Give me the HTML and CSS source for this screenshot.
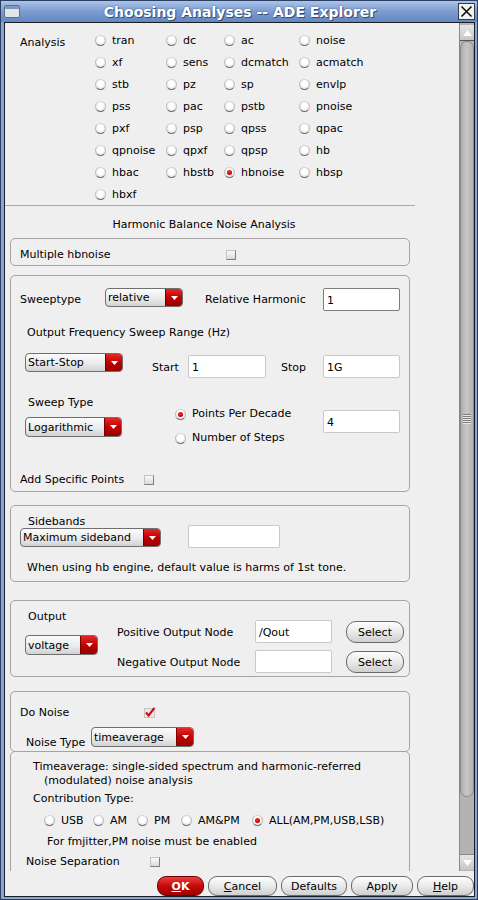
FILE: index.html
```html
<!DOCTYPE html>
<html>
<head>
<meta charset="utf-8">
<link rel="stylesheet" href="styles.css">
</head>
<body>
<div class="window">
  <div class="titlebar">
    <svg class="win-icon" width="16" height="13" viewBox="0 0 16 13"><rect x="0.5" y="0.5" width="15" height="12" rx="1.5" fill="#e4e4e4" stroke="#5d6f8e"/><rect x="1" y="1" width="14" height="3" fill="#7f97bd"/></svg>
    <div class="title">Choosing Analyses -- ADE Explorer</div>
    <svg class="close" width="17" height="17" viewBox="0 0 17 17"><rect x="0.5" y="0.5" width="16" height="16" fill="#f2f2f2" stroke="#3a3a3a"/><path d="M3.5 3.5 L13.5 13.5 M13.5 3.5 L3.5 13.5" stroke="#111" stroke-width="1.6"/></svg>
  </div>
  <div class="client">
    <div class="main">
      <div class="scroll">
        <div class="analysis">
          <div class="an-label">Analysis</div>
          <div class="an-grid">
            <div class="opt"><span class="radio"></span>tran</div>
            <div class="opt"><span class="radio"></span>dc</div>
            <div class="opt"><span class="radio"></span>ac</div>
            <div class="opt"><span class="radio"></span>noise</div>
            <div class="opt"><span class="radio"></span>xf</div>
            <div class="opt"><span class="radio"></span>sens</div>
            <div class="opt"><span class="radio"></span>dcmatch</div>
            <div class="opt"><span class="radio"></span>acmatch</div>
            <div class="opt"><span class="radio"></span>stb</div>
            <div class="opt"><span class="radio"></span>pz</div>
            <div class="opt"><span class="radio"></span>sp</div>
            <div class="opt"><span class="radio"></span>envlp</div>
            <div class="opt"><span class="radio"></span>pss</div>
            <div class="opt"><span class="radio"></span>pac</div>
            <div class="opt"><span class="radio"></span>pstb</div>
            <div class="opt"><span class="radio"></span>pnoise</div>
            <div class="opt"><span class="radio"></span>pxf</div>
            <div class="opt"><span class="radio"></span>psp</div>
            <div class="opt"><span class="radio"></span>qpss</div>
            <div class="opt"><span class="radio"></span>qpac</div>
            <div class="opt"><span class="radio"></span>qpnoise</div>
            <div class="opt"><span class="radio"></span>qpxf</div>
            <div class="opt"><span class="radio"></span>qpsp</div>
            <div class="opt"><span class="radio"></span>hb</div>
            <div class="opt"><span class="radio"></span>hbac</div>
            <div class="opt"><span class="radio"></span>hbstb</div>
            <div class="opt"><span class="radio on"></span>hbnoise</div>
            <div class="opt"><span class="radio"></span>hbsp</div>
            <div class="opt"><span class="radio"></span>hbxf</div>
          </div>
        </div>
        <div class="sep"></div>
        <div class="heading">Harmonic Balance Noise Analysis</div>

        <div class="box box1">
          <div class="row-c"><span class="lbl w206">Multiple hbnoise</span><span class="cb"></span></div>
        </div>

        <div class="box box2">
          <div class="r1">
            <span class="lbl w85 lh24 mt1">Sweeptype</span>
            <div class="dd w78 mt1"><span class="dd-val">relative</span><span class="dd-btn"><svg width="7" height="4" viewBox="0 0 7 4"><path d="M0 0H7L3.5 4Z" fill="#fff"/></svg></span></div>
            <span class="lbl w118 lh24 ml22 mt1">Relative Harmonic</span>
            <div class="inp w77 mt1 dark">1</div>
          </div>
          <div class="r2 lh16">Output Frequency Sweep Range (Hz)</div>
          <div class="r3">
            <div class="dd w98"><span class="dd-val">Start-Stop</span><span class="dd-btn"><svg width="7" height="4" viewBox="0 0 7 4"><path d="M0 0H7L3.5 4Z" fill="#fff"/></svg></span></div>
            <span class="lbl w36 lh16 ml29 mt7">Start</span>
            <div class="inp w78 mt2">1</div>
            <span class="lbl w42 lh16 ml15 mt7">Stop</span>
            <div class="inp w77 mt2">1G</div>
          </div>
          <div class="r4">
            <div class="col-left">
              <div class="lh16 pl3 pt1">Sweep Type</div>
              <div class="dd w97 h20 mt6"><span class="dd-val">Logarithmic</span><span class="dd-btn"><svg width="7" height="4" viewBox="0 0 7 4"><path d="M0 0H7L3.5 4Z" fill="#fff"/></svg></span></div>
            </div>
            <div class="col-mid">
              <div class="opt lh24"><span class="radio on"></span>Points Per Decade</div>
              <div class="opt lh24"><span class="radio"></span>Number of Steps</div>
            </div>
            <div class="inp w77 mt16">4</div>
          </div>
          <div class="r5 row-c lh16"><span class="lbl w124">Add Specific Points</span><span class="cb"></span></div>
        </div>

        <div class="box box3">
          <div class="sb-row">
            <div class="sb-left">
              <div class="lh14 pl8 pt1">Sidebands</div>
              <div class="dd w141"><span class="dd-val">Maximum sideband</span><span class="dd-btn"><svg width="7" height="4" viewBox="0 0 7 4"><path d="M0 0H7L3.5 4Z" fill="#fff"/></svg></span></div>
            </div>
            <div class="inp w92 sb-inp"></div>
          </div>
          <div class="sb-note lh16">When using hb engine, default value is harms of 1st tone.</div>
        </div>

        <div class="box box4">
          <div class="out-row">
            <div class="out-left">
              <div class="lh16 pl3">Output</div>
              <div class="dd w73 h20 mt10"><span class="dd-val">voltage</span><span class="dd-btn"><svg width="7" height="4" viewBox="0 0 7 4"><path d="M0 0H7L3.5 4Z" fill="#fff"/></svg></span></div>
            </div>
            <div class="out-right">
              <div class="node-row">
                <span class="lbl w138 node-lbl">Positive Output Node</span>
                <div class="inp w77">/Qout</div>
                <div class="pbtn sel">Select</div>
              </div>
              <div class="node-row mt7">
                <span class="lbl w138 node-lbl">Negative Output Node</span>
                <div class="inp w77"></div>
                <div class="pbtn sel">Select</div>
              </div>
            </div>
          </div>
        </div>

        <div class="box box5">
          <div class="row-c lh16 pl9"><span class="lbl w124">Do Noise</span><svg class="check" width="12" height="11" viewBox="0 0 12 11"><rect x="0.5" y="1.5" width="10" height="9" fill="#e8e8e8" stroke="#c4c4c4"/><path d="M2 5.5 L4.6 8.5 L10.5 0.8" fill="none" stroke="#d20f0f" stroke-width="2.2"/></svg></div>
          <div class="nt-row">
            <span class="lbl w65 lh16 mt8">Noise Type</span>
            <div class="dd w103 h20"><span class="dd-val">timeaverage</span><span class="dd-btn"><svg width="7" height="4" viewBox="0 0 7 4"><path d="M0 0H7L3.5 4Z" fill="#fff"/></svg></span></div>
          </div>
        </div>

        <div class="box box6">
          <div class="lh14 pl22">Timeaverage: single-sided spectrum and harmonic-referred</div>
          <div class="lh14 pl33">(modulated) noise analysis</div>
          <div class="lh14 pl22 mt4">Contribution Type:</div>
          <div class="ct-row">
            <div class="opt w49"><span class="radio"></span>USB</div>
            <div class="opt w44"><span class="radio"></span>AM</div>
            <div class="opt w44"><span class="radio"></span>PM</div>
            <div class="opt w71"><span class="radio"></span>AM&amp;PM</div>
            <div class="opt"><span class="radio on"></span>ALL(AM,PM,USB,LSB)</div>
          </div>
          <div class="lh16 pl36 mt3">For fmjitter,PM noise must be enabled</div>
          <div class="row-c lh16 pl15 mt4"><span class="lbl w124">Noise Separation</span><span class="cb"></span></div>
        </div>
      </div>
      <div class="sbar">
        <div class="sb-arrow up"><svg width="9" height="6" viewBox="0 0 9 6"><path d="M0 6H9L4.5 0Z" fill="#fff"/></svg></div>
        <div class="sb-thumb"><div class="grip"></div></div>
        <div class="sb-trough"></div>
        <div class="sb-arrow down"><svg width="9" height="6" viewBox="0 0 9 6"><path d="M0 0H9L4.5 6Z" fill="#fff"/></svg></div>
      </div>
    </div>
    <div class="buttons">
      <div class="pbtn ok"><u>O</u>K</div>
      <div class="pbtn w69"><u>C</u>ancel</div>
      <div class="pbtn w66">Defaults</div>
      <div class="pbtn w62">Apply</div>
      <div class="pbtn w57"><u>H</u>elp</div>
    </div>
  </div>
</div>
</body>
</html>
```
FILE: styles.css
```css
html, body { margin: 0; padding: 0; }
body { background: #ffffff; font-family: "DejaVu Sans", sans-serif; font-size: 11px; color: #000; }

.window {
  width: 478px; height: 900px; box-sizing: border-box;
  border: 1px solid #2b3e63;
  background: #86a6d6;
  display: flex; flex-direction: column;
}
.titlebar {
  height: 21px; flex: none;
  display: flex; align-items: center;
  background: linear-gradient(#acc4e8, #7f9fd3 45%, #6287c2);
  padding: 0 2px 0 3px;
}
.win-icon { flex: none; }
.title {
  flex: 1; text-align: center;
  font-weight: bold; font-size: 14px; color: #fff; line-height: 18px;
  text-shadow: 1px 1px 0 #3a4d6e, 0 0 2px #4b6290;
  margin-left: 2px;
}
.close { flex: none; }

.client {
  flex: 1;
  margin: 0 2px 2px 3px;
  border: 1px solid #1d1d1d;
  background: #efefef;
  display: flex; flex-direction: column;
  min-height: 0;
}
.main { height: 848px; display: flex; flex: none; }
.scroll { width: 454px; height: 848px; overflow: hidden; flex: none; }

/* analysis radios */
.analysis { display: flex; padding: 6px 0 0 15px; }
.an-label { width: 75px; line-height: 22px; margin-top: 3px; }
.an-grid { display: grid; grid-template-columns: 71px 58px 75px 80px; grid-auto-rows: 22px; }
.opt { display: flex; align-items: center; gap: 6px; white-space: nowrap; }

.radio {
  width: 11px; height: 11px; box-sizing: border-box; border-radius: 50%;
  flex: none; position: relative;
  border: 1px solid; border-color: #d2d2d2 #bcbcbc #6e6e6e #bcbcbc;
  background: radial-gradient(circle at 50% 40%, #ffffff 0 40%, #ececec 65%, #cfcfcf 100%);
}
.radio.on::after {
  content: ""; position: absolute; left: 2px; top: 2px;
  width: 5px; height: 5px; border-radius: 50%;
  background: radial-gradient(circle at 45% 40%, #ff3030, #c80000 60%, #900000);
}

.sep { width: 410px; height: 1px; background: #a9a9a9; }
.heading { margin-top: 11px; line-height: 16px; width: 398px; text-align: center; }

.box {
  margin-left: 5px; width: 400px; box-sizing: border-box;
  border: 1px solid #a4a4a4; border-radius: 5px;
}
.box1 { margin-top: 5px; padding: 5px 0 0 9px; line-height: 21px; }
.box2 { margin-top: 9px; padding: 11px 0 3px 0; }
.box3 { margin-top: 13px; padding: 8px 0 5px 9px; }
.box4 { margin-top: 18px; padding: 8px 0 3px 14px; }
.box5 { margin-top: 14px; padding: 13px 0 0 0; }
.box6 { margin-top: -1px; padding: 8px 0 20px 0; border-radius: 5px 5px 0 0; }

.row-c { display: flex; align-items: center; }
.lbl { display: block; flex: none; white-space: nowrap; }

.r1 { display: flex; align-items: flex-start; padding-left: 9px; height: 24px; }
.r2 { margin-top: 14px; padding-left: 16px; }
.r3 { display: flex; align-items: flex-start; margin-top: 12px; padding-left: 14px; }
.r4 { display: flex; align-items: flex-start; margin-top: 16px; padding-left: 14px; }
.col-left { width: 150px; flex: none; }
.col-mid { width: 148px; flex: none; margin-top: 8px; }
.r5 { margin-top: 22px; padding-left: 9px; }

.sb-row { display: flex; }
.sb-left { flex: none; }
.sb-left .lh14 { line-height: 13px; }
.sb-inp { align-self: flex-end; margin-bottom: -1px; margin-left: 27px; }
.sb-note { margin-top: 13px; padding-left: 7px; }

.out-row { display: flex; align-items: flex-start; }
.out-left { width: 92px; flex: none; }
.out-right { margin-top: 11px; }
.node-row { display: flex; align-items: flex-start; }
.node-lbl { height: 23px; box-sizing: border-box; padding-top: 2px; line-height: 21px; }
.node-row .sel { margin-left: 14px; margin-top: 1px; }

.nt-row { display: flex; align-items: flex-start; margin-top: 6px; padding-left: 15px; }
.check { flex: none; margin-top: -2px; }

.ct-row { display: flex; margin-top: 3px; padding-left: 33px; height: 22px; }

/* dropdown */
.dd {
  display: flex; flex: none; height: 19px; box-sizing: border-box;
  border: 1px solid #6f6f6f; border-radius: 4px; overflow: hidden;
  background: linear-gradient(#fbfbfb, #ebebeb 55%, #d2d2d2);
}
.dd-val { flex: 1; padding: 1px 0 0 2px; line-height: 16px; white-space: nowrap; overflow: hidden; }
.dd-btn {
  width: 16px; flex: none; display: flex; align-items: center; justify-content: center;
  background: linear-gradient(#e32a2a, #c00000 50%, #980000);
  border-left: 1px solid #7a0000;
}
.dd.h20 { height: 20px; }
.dd.h20 .dd-val { line-height: 17px; }

/* input */
.inp {
  flex: none; height: 23px; box-sizing: border-box;
  background: #fff; border: 1px solid #c9c9c9; border-radius: 2px;
  padding: 3px 0 0 3px; line-height: 18px; white-space: nowrap;
}
.inp.dark { border-color: #7d7d7d; }

/* checkbox */
.cb {
  display: block; flex: none; width: 10px; height: 10px; box-sizing: border-box;
  border: 1px solid; border-color: #c2c2c2 #7e7e7e #7e7e7e #c2c2c2;
  background: linear-gradient(#fafafa, #dadada);
}

/* pill buttons */
.pbtn {
  flex: none; box-sizing: border-box; height: 20px;
  border: 1px solid #6a6a6a; border-radius: 9px;
  background: linear-gradient(#fdfdfd, #ececec 45%, #cfcfcf);
  text-align: center; padding-top: 2px; line-height: 16px; white-space: nowrap;
}
.pbtn.sel { width: 58px; height: 22px; padding-top: 2px; line-height: 18px; border-radius: 10px; }
.pbtn u { text-decoration: underline; }
.pbtn.ok {
  width: 47px; color: #fff; font-weight: bold;
  background: linear-gradient(#e84040, #c80808 50%, #9e0000);
  border-color: #6b0000;
}

.buttons { display: flex; justify-content: flex-end; gap: 4px; padding-top: 5px; }

/* scrollbar */
.sbar {
  width: 15px; flex: none; box-sizing: border-box;
  background: #b3b3b3; border-left: 1px solid #888;
  display: flex; flex-direction: column; padding-top: 2px;
}
.sb-arrow {
  height: 15px; flex: none; display: flex; align-items: center; justify-content: center;
  background: linear-gradient(#e6e6e6, #c6c6c6);
}
.sb-arrow.up { border-bottom: 1px solid #555; }
.sb-arrow.down { border-top: 1px solid #8a8a8a; margin-bottom: 1px; }
.sb-thumb {
  height: 756px; flex: none; box-sizing: border-box;
  border: 1px solid #8a8a8a; border-radius: 7px;
  background: linear-gradient(90deg, #aeaeae, #c6c6c6 45%, #b4b4b4);
  display: flex; align-items: center; justify-content: center;
}
.grip {
  width: 8px; height: 10px;
  background: repeating-linear-gradient(#7e7e7e 0 1px, #e8e8e8 1px 2px);
}
.sb-trough { flex: 1; }

/* utilities */
.w36 { width: 36px; } .w42 { width: 42px; } .w44 { width: 44px; } .w49 { width: 49px; }
.w57 { width: 57px; } .w62 { width: 62px; } .w65 { width: 65px; } .w66 { width: 66px; } .w69 { width: 69px; }
.w71 { width: 71px; } .w73 { width: 73px; } .w77 { width: 77px; } .w78 { width: 78px; }
.w85 { width: 85px; } .w92 { width: 92px; } .w97 { width: 97px; } .w98 { width: 98px; } .w103 { width: 103px; }
.w118 { width: 118px; } .w124 { width: 124px; } .w138 { width: 138px; } .w141 { width: 141px; } .w206 { width: 206px; }
.lh14 { line-height: 14px; } .lh16 { line-height: 16px; } .lh23 { line-height: 23px; } .lh24 { line-height: 24px; }
.mt1 { margin-top: 1px; } .mt2 { margin-top: 2px; } .mt3 { margin-top: 3px; } .mt4 { margin-top: 4px; }
.mt5 { margin-top: 5px; } .mt6 { margin-top: 6px; } .mt7 { margin-top: 7px; } .mt8 { margin-top: 8px; }
.mt10 { margin-top: 10px; } .mt11 { margin-top: 11px; } .mt16 { margin-top: 16px; }
.ml15 { margin-left: 15px; } .ml22 { margin-left: 22px; } .ml29 { margin-left: 29px; }
.pt1 { padding-top: 1px; }
.pl3 { padding-left: 3px; } .pl8 { padding-left: 8px; } .pl9 { padding-left: 9px; } .pl15 { padding-left: 15px; }
.pl22 { padding-left: 22px; } .pl33 { padding-left: 33px; } .pl36 { padding-left: 36px; }
```
